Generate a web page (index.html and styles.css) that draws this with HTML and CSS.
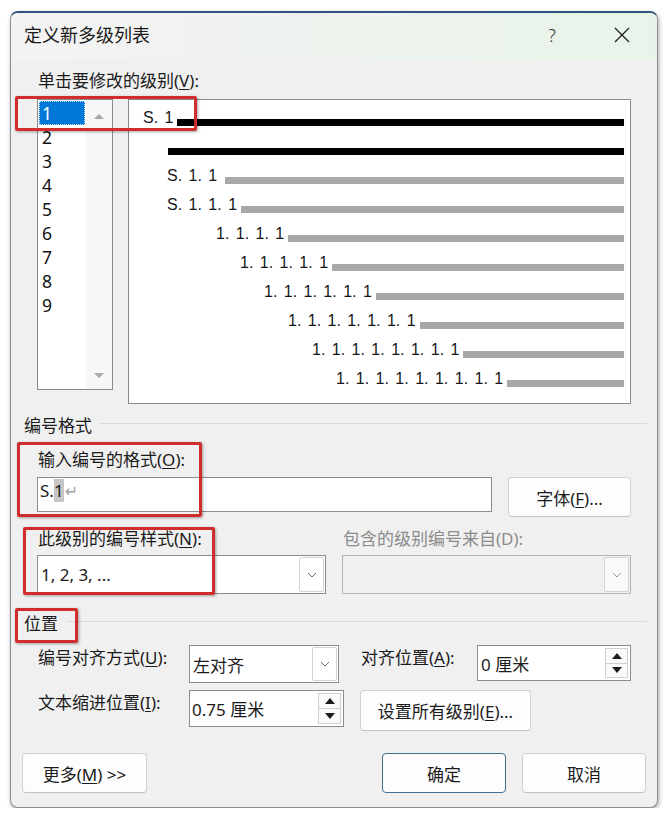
FILE: index.html
```html
<!DOCTYPE html>
<html lang="zh-CN">
<head>
    <meta charset="UTF-8">
    <meta name="viewport" content="width=device-width, initial-scale=1.0">
    <title>定义新多级列表</title>
    <link rel="stylesheet" href="styles.css">
</head>
<body>
    <div class="dialog">
        <div class="titlebar">
            <span class="title">定义新多级列表</span>
            <span class="help">?</span>
            <span class="close">
                <svg width="16" height="16" viewBox="0 0 16 16"><path d="M1 1L15 15M15 1L1 15" stroke="#1f1f1f" stroke-width="1.3" fill="none"/></svg>
            </span>
        </div>
        <div class="content">
            <div class="label first">单击要修改的级别(<u>V</u>):</div>
            <div class="levels">
                <div class="level-list">
                    <ul class="items">
                        <li class="sel">1</li>
                        <li>2</li>
                        <li>3</li>
                        <li>4</li>
                        <li>5</li>
                        <li>6</li>
                        <li>7</li>
                        <li>8</li>
                        <li>9</li>
                    </ul>
                    <div class="scroll">
                        <span class="arrow up"></span>
                        <span class="arrow down"></span>
                    </div>
                </div>
                <div class="preview">
                    <div class="pv lv0"><span class="num">S. 1</span><span class="bar dark"></span></div>
                    <div class="pv lv1"><span class="bar dark"></span></div>
                    <div class="pv lv2"><span class="num tab">S. 1. 1</span><span class="bar"></span></div>
                    <div class="pv lv3"><span class="num">S. 1. 1. 1</span><span class="bar"></span></div>
                    <div class="pv lv4"><span class="num">1. 1. 1. 1</span><span class="bar"></span></div>
                    <div class="pv lv5"><span class="num">1. 1. 1. 1. 1</span><span class="bar"></span></div>
                    <div class="pv lv6"><span class="num">1. 1. 1. 1. 1. 1</span><span class="bar"></span></div>
                    <div class="pv lv7"><span class="num">1. 1. 1. 1. 1. 1. 1</span><span class="bar"></span></div>
                    <div class="pv lv8"><span class="num">1. 1. 1. 1. 1. 1. 1. 1</span><span class="bar"></span></div>
                    <div class="pv lv9"><span class="num">1. 1. 1. 1. 1. 1. 1. 1. 1</span><span class="bar"></span></div>
                </div>
            </div>

            <div class="group g-format">编号格式</div>
            <div class="section">
                <div class="label l-format">输入编号的格式(<u>O</u>):</div>
                <div class="row r-format">
                    <div class="textbox"><span class="tb-line">S.<span class="hl">1</span><span class="para">↵</span></span></div>
                    <button class="btn font-btn">字体(<u>F</u>)...</button>
                </div>
                <div class="row r-labels">
                    <div class="label col-left">此级别的编号样式(<u>N</u>):</div>
                    <div class="label disabled">包含的级别编号来自(D):</div>
                </div>
                <div class="row r-selects">
                    <div class="select wide">
                        <span class="value">1, 2, 3, ...</span>
                        <span class="drop"><svg width="10" height="6" viewBox="0 0 10 6"><path d="M1 1L5 5L9 1" stroke="#6a6a6a" fill="none"/></svg></span>
                    </div>
                    <div class="select wide disabled">
                        <span class="value"></span>
                        <span class="drop"><svg width="10" height="6" viewBox="0 0 10 6"><path d="M1 1L5 5L9 1" stroke="#9a9a9a" fill="none"/></svg></span>
                    </div>
                </div>
            </div>

            <div class="group g-pos">位置</div>
            <div class="section">
                <div class="row r-align">
                    <div class="label col-name">编号对齐方式(<u>U</u>):</div>
                    <div class="select small">
                        <span class="value">左对齐</span>
                        <span class="drop"><svg width="10" height="6" viewBox="0 0 10 6"><path d="M1 1L5 5L9 1" stroke="#6a6a6a" fill="none"/></svg></span>
                    </div>
                    <div class="label col-at">对齐位置(<u>A</u>):</div>
                    <div class="spin spin-at">
                        <span class="value">0 厘米</span>
                        <span class="spin-btns"><span class="sb"><span class="tri up"></span></span><span class="sb"><span class="tri down"></span></span></span>
                    </div>
                </div>
                <div class="row r-indent">
                    <div class="label col-name">文本缩进位置(<u>I</u>):</div>
                    <div class="spin spin-indent">
                        <span class="value">0.75 厘米</span>
                        <span class="spin-btns"><span class="sb"><span class="tri up"></span></span><span class="sb"><span class="tri down"></span></span></span>
                    </div>
                    <button class="btn all-btn">设置所有级别(<u>E</u>)...</button>
                </div>
            </div>

            <div class="footer">
                <button class="btn more">更多(<u>M</u>) &gt;&gt;</button>
                <div class="actions">
                    <button class="btn ok">确定</button>
                    <button class="btn">取消</button>
                </div>
            </div>
        </div>
    </div>

    <div class="mark m1"></div>
    <div class="mark m2"></div>
    <div class="mark m3"></div>
    <div class="mark m4"></div>
</body>
</html>
```

FILE: styles.css
```css
body { margin: 0; background: #fff; font-family: "Noto Sans", "Noto Sans CJK SC", sans-serif; font-size: 17px; color: #1b1b1b; }
u { text-decoration-thickness: 1px; text-underline-offset: 2px; }

.dialog { margin: 11px 0 0 10px; width: 648px; height: 797px; box-sizing: border-box; background: #f0f0f0; border: 1px solid #8f8f8f; border-top: 2px solid #34527f; border-radius: 8px; box-shadow: 1px 2px 4px rgba(0, 0, 0, 0.35); overflow: hidden; }

.titlebar { height: 47px; display: flex; align-items: center; padding: 0 0 3px 13px; box-sizing: border-box; background: linear-gradient(90deg, #f3f3f3 0%, #eef2ee 45%, #e8f4e9 100%); }
.title { flex: 1; font-size: 18px; line-height: 24px; color: #1a1a1a; }
.help { width: 40px; text-align: center; font-size: 18px; font-weight: 300; color: #333; }
.close { width: 40px; margin: 0 15px 0 30px; display: flex; justify-content: center; }

.content { padding: 0 11px 13px; }
.label { height: 24px; line-height: 24px; padding-left: 1px; white-space: nowrap; }
.label.first { margin-top: 9px; padding-left: 16px; }
.label.disabled { color: #8b8b8b; padding-left: 0; }

.levels { display: flex; gap: 15px; margin-top: 6px; padding-left: 15px; align-items: flex-start; }
.level-list { width: 76px; height: 291px; box-sizing: border-box; border: 1px solid #8a8a8a; background: #fff; display: flex; padding: 1px 0 0 1px; }
.items { list-style: none; margin: 0; padding: 0; width: 47px; }
.items li { height: 24px; line-height: 24px; padding-left: 3px; font-size: 17.5px; color: #111; }
.items li.sel { background: #0078d7; color: #fff; outline: 1px dotted #cfe3f7; outline-offset: -1px; margin-right: 1px; }
.scroll { width: 26px; margin-top: -1px; background: #f7f7f7; display: flex; flex-direction: column; justify-content: space-between; align-items: center; padding: 14px 0 11px; box-sizing: border-box; }
.arrow { width: 0; height: 0; border-left: 5px solid transparent; border-right: 5px solid transparent; }
.arrow.up { border-bottom: 5px solid #a8a8a8; }
.arrow.down { border-top: 5px solid #a8a8a8; }

.preview { width: 503px; height: 305px; box-sizing: border-box; border: 1px solid #8a8a8a; background: #fff; padding: 1px 6px 0 0; }
.pv { height: 29px; display: flex; align-items: flex-end; }
.num { font-family: "Liberation Sans", Arial, sans-serif; font-size: 16px; line-height: 18px; margin: 0 4px 3px 0; word-spacing: 2px; white-space: pre; color: #161616; }
.num.tab { margin-right: 8px; }
.bar { flex: 1; height: 7px; margin-bottom: 4px; background: #a8a8a8; }
.bar.dark { background: #000; }
.lv0 { padding-left: 14px; }
.lv1 { padding-left: 39px; }
.lv2, .lv3 { padding-left: 38px; }
.lv4 { padding-left: 87px; }
.lv5 { padding-left: 111px; }
.lv6 { padding-left: 135px; }
.lv7 { padding-left: 159px; }
.lv8 { padding-left: 183px; }
.lv9 { padding-left: 207px; }

.group { display: flex; align-items: center; height: 24px; padding-left: 2px; white-space: nowrap; }
.group::after { content: ""; flex: 1; height: 1px; background: #dadada; margin: 0 -1px 1px 8px; }
.g-format { margin-top: 8px; }
.g-pos { margin-top: 16px; }

.section { padding: 0 15px; }
.row { display: flex; align-items: flex-start; }
.l-format { margin-top: 12px; }
.r-format { justify-content: space-between; margin-top: 5px; }
.r-labels { margin-top: 10px; }
.r-selects { justify-content: space-between; margin-top: 4px; }
.r-align { margin-top: 11px; }
.r-indent { margin-top: 7px; }
.col-left { width: 305px; }
.col-name { width: 151px; margin-top: 1px; }
.col-at { width: 116px; margin: 1px 0 0 21px; }

.textbox { width: 455px; height: 35px; box-sizing: border-box; border: 1px solid #8c8c8c; background: #fff; padding: 1px 0 0 2px; }
.tb-line { line-height: 20px; }
.hl { background: #c6c6c6; }
.para { font-family: "DejaVu Sans", sans-serif; font-size: 16px; color: #a3a3a3; margin-left: 1px; }

.select, .spin { box-sizing: border-box; border: 1px solid #8c8c8c; background: #fff; display: flex; align-items: center; padding-left: 3px; }
.select .value, .spin .value { flex: 1; white-space: nowrap; }
.select.wide { width: 289px; height: 39px; }
.select.small { width: 150px; height: 38px; }
.select.disabled { background: #f0f0f0; border-color: #b4b4b4; }
.drop { width: 25px; align-self: stretch; margin: 1px; box-sizing: border-box; border: 1px solid #d4d4d4; border-radius: 2px; background: #fff; display: flex; align-items: center; justify-content: center; }
.select.disabled .drop { background: #f9f9f9; }

.spin-at { width: 154px; height: 36px; }
.spin-indent { width: 155px; height: 37px; padding-left: 2px; }
.spin-btns { width: 23px; align-self: stretch; margin: 2px 2px 2px 0; box-sizing: border-box; border: 1px solid #d0d0d0; background: #fafafa; display: flex; flex-direction: column; }
.sb { flex: 1; display: flex; align-items: center; justify-content: center; }
.sb + .sb { border-top: 1px solid #d0d0d0; }
.tri { width: 0; height: 0; border-left: 5px solid transparent; border-right: 5px solid transparent; }
.tri.up { border-bottom: 6px solid #1d1d1d; }
.tri.down { border-top: 6px solid #1d1d1d; }

.btn { font: inherit; font-size: 17px; color: #1b1b1b; background: #fdfdfd; border: 1px solid #d2d2d2; border-bottom-color: #c2c2c2; border-radius: 4px; height: 40px; padding: 0; box-sizing: border-box; }
.font-btn { width: 123px; }
.all-btn { width: 171px; height: 41px; margin-left: 16px; }
.footer { display: flex; justify-content: space-between; margin-top: 22px; }
.more { width: 125px; }
.actions { display: flex; gap: 16px; }
.actions .btn { width: 124px; }
.btn.ok { border-color: #3d7091; }

.mark { position: absolute; box-sizing: border-box; border: 3px solid #d02d2d; border-radius: 2px; box-shadow: 1px 1px 3px rgba(0, 0, 0, 0.35); }
.m1 { left: 15px; top: 96px; width: 182px; height: 35px; }
.m2 { left: 17px; top: 442px; width: 185px; height: 75px; }
.m3 { left: 23px; top: 527px; width: 192px; height: 68px; }
.m4 { left: 15px; top: 608px; width: 63px; height: 35px; }
```
